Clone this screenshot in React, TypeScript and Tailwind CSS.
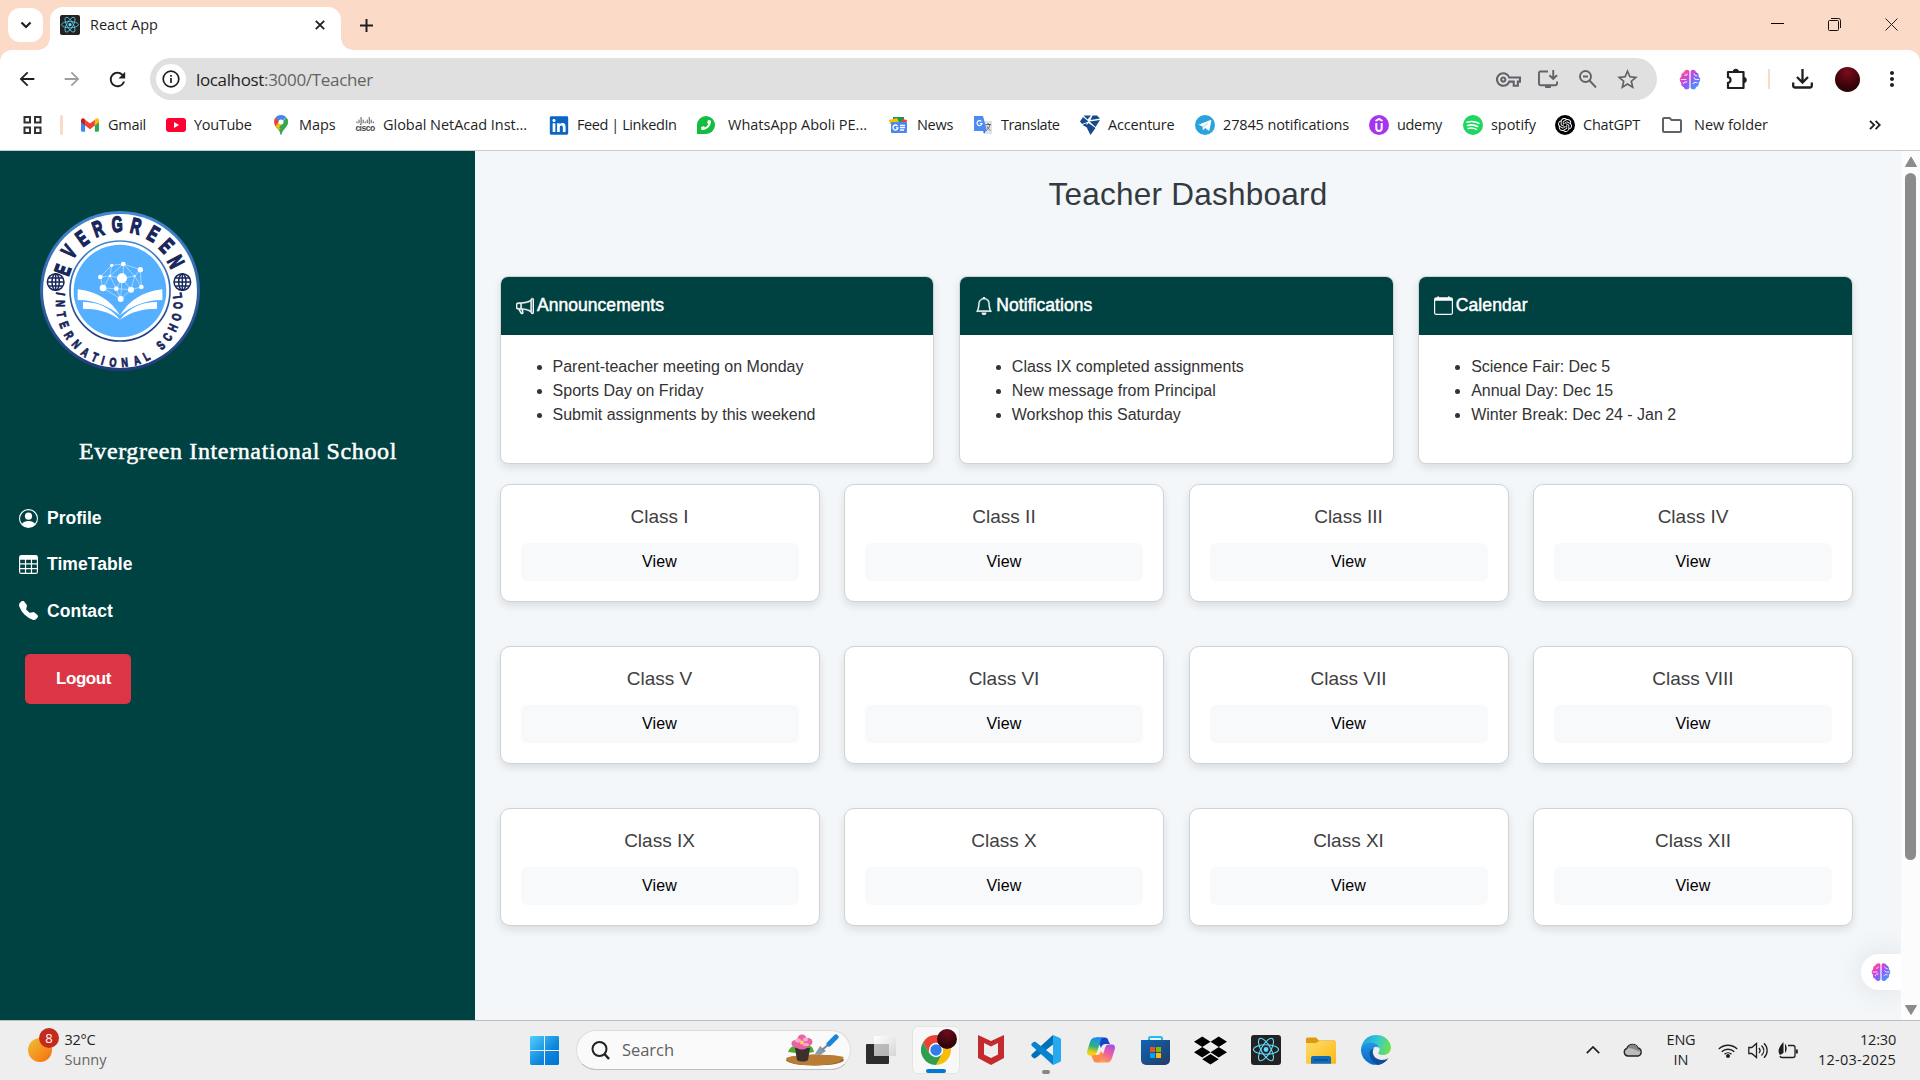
import React, { useLayoutEffect, useRef } from "react";
import { BsPersonCircle, BsTable, BsTelephoneFill, BsMegaphone, BsBell, BsCalendar } from "react-icons/bs";
import { FaLinkedin, FaPhoneAlt, FaDropbox } from "react-icons/fa";
import { SiOpenai } from "react-icons/si";
import {
  MdArrowBack, MdArrowForward, MdRefresh, MdOutlineVpnKey, MdStarOutline,
  MdMoreVert, MdOutlineFolder,
} from "react-icons/md";

/* Spreads the letters of a label over a given width. */
function Fit({ w, children, className = "" }: { w: number; children: string; className?: string }) {
  const ref = useRef<HTMLSpanElement>(null);
  useLayoutEffect(() => {
    const el = ref.current;
    if (!el) return;
    el.style.letterSpacing = "0px";
    const natural = el.getBoundingClientRect().width;
    el.style.letterSpacing = `${(w - natural) / children.length}px`;
  }, [w, children]);
  return <span ref={ref} className={`inline-block whitespace-nowrap ${className}`}>{children}</span>;
}

function ReactTile({ className = "" }: { className?: string }) {
  return (
    <svg viewBox="0 0 30 30" className={className}>
      <rect width="30" height="30" rx="3" fill="#222" />
      <g fill="none" stroke="#61dafb" strokeWidth="1.1">
        <ellipse cx="15" cy="14.5" rx="12.6" ry="4.7" />
        <ellipse cx="15" cy="14.5" rx="12.6" ry="4.7" transform="rotate(60 15 14.5)" />
        <ellipse cx="15" cy="14.5" rx="12.6" ry="4.7" transform="rotate(120 15 14.5)" />
      </g>
      <circle cx="15" cy="14.5" r="2.4" fill="#61dafb" />
    </svg>
  );
}

function Brain({ id, className = "" }: { id: string; className?: string }) {
  return (
    <svg viewBox="0 0 24 24" className={className}>
      <defs>
        <linearGradient id={id} x1="0" y1="0" x2="1" y2="1">
          <stop offset="0" stopColor="#ff9a2e" />
          <stop offset=".25" stopColor="#f03cc0" />
          <stop offset=".55" stopColor="#8b5cf6" />
          <stop offset="1" stopColor="#2bb3ff" />
        </linearGradient>
      </defs>
      <path fill={`url(#${id})`} d="M11.3 3.2v18c-2 2.6-5.6 1.8-6.2-1C2.600 19.300 2 17.200 2.500 15.500.200 13.500.300 10.300 2.500 9 2 6.500 3.500 4.400 5.400 4 6.500.800 10.500.700 11.300 3.200zM12.700 3.200v18c2 2.600 5.600 1.800 6.200-1 2.500-.900 3.100-3 2.600-4.700 2.300-2 2.200-5.200 0-6.500.500-2.500-1-4.600-2.900-5C17.500.800 13.500.700 12.700 3.200z" />
      <g fill="none" stroke="#fff" strokeWidth="1.100" opacity=".85">
        <path d="M2 12h6M6 7.500c2 0 3-.500 3-2M5 17c0-2 2-2.500 4-2.500M22 12h-4l-2-2M16 5.500l2 2.500h2M15 17l2-2 3 .500" />
      </g>
    </svg>
  );
}

const school: [string, number, number][] = [
  ["I", 183, 432], ["N", 182, 461], ["T", 185, 494], ["E", 193, 524], ["R", 208, 555], ["N", 230, 582],
  ["A", 256, 606], ["T", 285, 621], ["I", 309, 630], ["O", 339, 636], ["N", 374, 636], ["A", 410, 630],
  ["L", 439, 618], ["S", 482, 585], ["C", 502, 561], ["H", 518, 533], ["O", 529, 501], ["O", 533, 466], ["L", 531, 437],
];
const evergreen: [string, number, number][] = [
  ["E", 188, 360], ["V", 207, 305], ["E", 246, 265], ["R", 294, 236], ["G", 351, 222],
  ["R", 408, 228], ["E", 460, 251], ["E", 500, 287], ["N", 528, 335],
];
const deg = (a: number) => (a * 180) / Math.PI;

function Globe({ x, y }: { x: number; y: number }) {
  return (
    <g transform={`translate(${x} ${y})`} fill="none" stroke="#17265c" strokeWidth="4.500">
      <circle r="25" fill="#fff" />
      <ellipse rx="11" ry="25" />
      <path d="M0-25V25M-25 0H25M-21-12H21M-21 12H21" />
    </g>
  );
}

function Crest() {
  const nodes: [number, number, number][] = [
    [335, 346, 5], [370, 342, 7], [421, 359, 8], [301, 381, 7], [330, 378, 4], [366, 385, 15], [404, 378, 3],
    [309, 414, 10], [349, 416, 7], [393, 419, 9], [424, 411, 7], [362, 447, 9],
  ];
  return (
    <svg viewBox="120 183 480 480" className="h-40 w-40">
      <defs>
        <linearGradient id="ring" x1="0" y1="0" x2="0" y2="1">
          <stop offset="0" stopColor="#4588d0" />
          <stop offset="1" stopColor="#203c7c" />
        </linearGradient>
      </defs>
      <circle cx="360" cy="423" r="240" fill="url(#ring)" />
      <circle cx="360" cy="423" r="231" fill="#fff" />
      <circle cx="360" cy="423" r="150" fill="#fff" stroke="url(#ring)" strokeWidth="5" />
      <circle cx="360" cy="423" r="139" fill="#55b0ff" />
      <g fontFamily="Liberation Sans" fontWeight="700" fill="#17265c" stroke="#17265c" textAnchor="middle">
        {evergreen.map(([c, x, y], i) => (
          <text key={i} fontSize="66" strokeWidth="4.500" transform={`translate(${x} ${y}) rotate(${deg(Math.atan2(x - 360, 423 - y))}) scale(.64 1)`} y="23">{c}</text>
        ))}
        {school.map(([c, x, y], i) => (
          <text key={i} fontSize="38" strokeWidth="2.500" transform={`translate(${x} ${y}) rotate(${deg(Math.atan2(357 - x, y - 462))}) scale(.72 1)`} y="14">{c}</text>
        ))}
      </g>
      <Globe x={167} y={396} />
      <Globe x={547} y={396} />
      <path fill="none" stroke="#d5ebff" strokeWidth="1.800" d="M335 346L370 342L421 359L424 411L393 419L362 447L309 414L301 381L335 346L330 378L301 381M330 378L370 342L404 378L421 359M330 378L366 385L404 378L424 411M330 378L309 414L349 416L362 447L366 385L349 416L330 378M393 419L366 385M393 419L404 378M370 342V385M349 416L393 419" />
      {nodes.map(([x, y, r], i) => <circle key={i} cx={x} cy={y} r={r} fill="#fff" />)}
      <g fill="#fff">
        <path d="M233 418c55 5 100 33 127 78-35-28-75-46-127-46z" />
        <path d="M487 418c-55 5-100 33-127 78 35-28 75-46 127-46z" />
        <path d="M249 456c45 0 82 16 111 53-35-25-70-33-111-33z" />
        <path d="M471 456c-45 0-82 16-111 53 35-25 70-33 111-33z" />
      </g>
    </svg>
  );
}

/* Bookmark icons */
const GmailIcon = () => (
  <svg viewBox="0 0 24 18" className="h-3.5 w-[18px]">
    <path fill="#4285f4" d="M0 2.500V16a2 2 0 0 0 2 2h3.500V7z" />
    <path fill="#34a853" d="M24 2.500V16a2 2 0 0 1-2 2h-3.500V7z" />
    <path fill="#ea4335" d="M5.500 9.500V2L12 7l6.500-5v7.500L12 14.500z" />
    <path fill="#c5221f" d="M0 2.800C0 .300 2.800-.900 4.600.800L5.500 2v7.500L0 5.400z" />
    <path fill="#fbbc04" d="M24 2.800C24 .300 21.200-.900 19.400.800L18.500 2v7.500L24 5.400z" />
  </svg>
);
const YoutubeIcon = () => (
  <svg viewBox="0 0 20 14" className="h-3.5 w-5"><rect width="20" height="14" rx="3" fill="#ff0033" /><path d="M8 4v6l5-3z" fill="#fff" /></svg>
);
const MapsIcon = () => (
  <svg viewBox="0 0 14 20" className="h-5 w-3.5">
    <path fill="#34a853" d="M1 10.500C3 14 6 15 6.300 19c.200 1.300 1.200 1.300 1.400 0C8 15 14 12 14 7c0-1-.200-2-.600-3z" />
    <path fill="#fbbc04" d="M1.500 11.200L9 4l2 5-6 6z" />
    <path fill="#ea4335" d="M1.700 2.500C-.500 5-.300 8.500 1.300 11L6 6z" />
    <path fill="#4285f4" d="M1.700 2.500C4.500-.900 9.500-.500 12 2L6 9 4.500 6z" />
    <path fill="#34a853" d="M12 2c2.500 3 2.500 6.500 0 9.500L8 14 5 13z" />
    <circle cx="7" cy="7" r="2.500" fill="#fff" />
  </svg>
);
const CiscoIcon = () => (
  <span className="-mt-[3px] flex w-5 flex-col items-center">
    <svg viewBox="0 0 20 9" className="h-2 w-5"><path stroke="#444" strokeWidth="1" fill="none" d="M1 5v2M3.300 3v4M5.600 0v8M7.900 3v4M10.200 5v2M12.500 3v4M14.800 0v8M17 3v4M19.300 5v2" /></svg>
    <span className="font-['Liberation_Sans'] text-[8.500px] font-bold leading-[6px] tracking-[-0.500px] text-[#444]">cisco</span>
  </span>
);
const WhatsIcon = () => (
  <span className="flex h-[18px] w-[18px] items-center justify-center rounded-full rounded-bl-[4px] bg-[#12bd3f]"><FaPhoneAlt className="h-2.5 w-2.5 -scale-x-100 rotate-0 text-white" /></span>
);
const NewsIcon = () => (
  <svg viewBox="0 0 20 20" className="h-5 w-5">
    <path fill="#0c9d58" d="M4 2h11v6H4z" /><path fill="#ea4335" d="M13 4l5 1-1 5h-6z" /><path fill="#fbbc04" d="M0 5l8-2 3 6H1z" />
    <rect x="2" y="7" width="16" height="11" rx="1" fill="#4d87f0" />
    <path d="M8.500 11A2.500 2.500 0 1 0 9 12.800H7M11 10.500h5M11 12.700h5M11 15h4" stroke="#fff" strokeWidth="1.300" fill="none" />
  </svg>
);
const TranslateIcon = () => (
  <svg viewBox="0 0 20 20" className="h-5 w-5">
    <path fill="#dfe3e8" d="M8 6h11v13h-7z" /><path fill="#1a56c4" d="M10 15l3 0-2 4z" /><path fill="#4b8bf5" d="M1 1h9l4 15H1z" />
    <path d="M8.500 6.500A2.500 2.500 0 1 0 9 8.500H6.800" stroke="#fff" strokeWidth="1.200" fill="none" />
    <path d="M12.500 9.500H18M15.200 8v1.500M17 9.700c-.800 3-2 4.300-3.500 5.500M14 11.500c1 2 2 3 3.500 4" stroke="#666" strokeWidth="1" fill="none" />
  </svg>
);
const AccentureIcon = () => (
  <svg viewBox="0 0 20 20" className="h-5 w-5">
    <path fill="#154a8c" d="M3.500 .5h7.500L7.500 4.500zM12.500 .5H17l3 3-9.500 1.500zM0 6.500l3-4.500 5.500 4.500L2 9zM20 5l-4.500 7-6-5.500zM8.500 8l7 5-5 7-4.500-9zM2.500 10l4-2 .5 4.500z" />
  </svg>
);
const TelegramIcon = () => (
  <svg viewBox="0 0 20 20" className="h-5 w-5"><circle cx="10" cy="10" r="10" fill="#2aa3dd" /><path fill="#fff" d="M3.500 9.700L15.500 5c.600-.200 1 .1.900.800l-2 9.300c-.1.600-.6.700-1.100.400L10.200 13l-1.700 1.700c-.4.400-.8.200-.8-.4V11.500z" /><path d="M7.500 11.500l5.500-3.500-4.500 4.300" stroke="#b5dcf0" strokeWidth=".8" fill="none" /></svg>
);
const UdemyIcon = () => (
  <svg viewBox="0 0 20 20" className="h-5 w-5"><circle cx="10" cy="10" r="10" fill="#a435f0" /><path d="M6.500 6L10 4l3.500 2M7.300 8v5.300a2.700 2.700 0 0 0 5.400 0V8" stroke="#fff" strokeWidth="2" fill="none" /></svg>
);
const SpotifyIcon = () => (
  <svg viewBox="0 0 20 20" className="h-5 w-5"><circle cx="10" cy="10" r="10" fill="#1ed760" /><path d="M4 7.200c4-1.200 8.500-.800 12 1.200M4.600 10.400c3.500-1 7-.600 10 1.100M5.200 13.400c3-.800 5.600-.500 8.200 1" stroke="#fff" strokeWidth="1.600" strokeLinecap="round" fill="none" /></svg>
);
const GptIcon = () => <span className="flex h-5 w-5 items-center justify-center rounded-full bg-black text-white"><SiOpenai className="h-3.5 w-3.5" /></span>;

const bookmarks: { t: string; w: number; icon: React.ReactNode; far?: boolean }[] = [
  { t: "Gmail", w: 38, icon: <GmailIcon /> },
  { t: "YouTube", w: 57.5, icon: <YoutubeIcon /> },
  { t: "Maps", w: 36.5, icon: <MapsIcon /> },
  { t: "Global NetAcad Inst...", w: 144, icon: <CiscoIcon /> },
  { t: "Feed | LinkedIn", w: 99.5, icon: <FaLinkedin className="h-[21px] w-[21px] text-[#0a66c2]" /> },
  { t: "WhatsApp Aboli PE...", w: 139, icon: <WhatsIcon />, far: true },
  { t: "News", w: 36, icon: <NewsIcon /> },
  { t: "Translate", w: 58.5, icon: <TranslateIcon /> },
  { t: "Accenture", w: 66.5, icon: <AccentureIcon /> },
  { t: "27845 notifications", w: 126, icon: <TelegramIcon /> },
  { t: "udemy", w: 45, icon: <UdemyIcon /> },
  { t: "spotify", w: 45, icon: <SpotifyIcon /> },
  { t: "ChatGPT", w: 57, icon: <GptIcon /> },
  { t: "New folder", w: 74, icon: <MdOutlineFolder className="h-6 w-6 shrink-0 text-[#5f6368]" />, far: true },
];

function TabStrip() {
  return (
    <div className="flex h-[50px] bg-[#fcdac8] pl-2">
      <div className="mt-2 flex h-[34px] w-[35px] items-center justify-center rounded-[12px] bg-white">
        <svg viewBox="0 0 12 8" className="h-2 w-3"><path d="M1.500 1.500L6 6l4.500-4.500" stroke="#1f1f1f" strokeWidth="2.200" fill="none" /></svg>
      </div>
      <div className="relative ml-[7px] mt-[7px] flex w-[291px] items-center rounded-t-[13px] bg-white pb-[7px] pl-2.5">
        <span className="absolute bottom-0 -left-3 h-3 w-3 bg-[radial-gradient(circle_at_0_0,transparent_11.5px,white_12px)]" />
        <span className="absolute bottom-0 -right-3 h-3 w-3 bg-[radial-gradient(circle_at_100%_0,transparent_11.5px,white_12px)]" />
        <ReactTile className="h-5 w-5" />
        <span className="ml-2.5 flex-1 text-[14.5px] text-[#1f1f1f]"><Fit w={68}>React App</Fit></span>
        <svg viewBox="0 0 10 10" className="mr-[16px] h-2.5 w-2.5"><path d="M.8.800l8.400 8.400M9.200.800L.8 9.200" stroke="#1f1f1f" strokeWidth="1.800" /></svg>
      </div>
      <svg viewBox="0 0 13 13" className="ml-[18.5px] mt-[18.5px] h-[13px] w-[13px]"><path d="M6.500 0v13M0 6.500h13" stroke="#1f1f1f" strokeWidth="2" /></svg>
      <div className="ml-auto mr-[22px] mt-[18px] flex h-[13px] gap-[44px]">
        <svg viewBox="0 0 13 13" className="h-[13px] w-[13px]"><path d="M0 5.500h13" stroke="#000" /></svg>
        <svg viewBox="0 0 13 13" className="h-[13px] w-[13px]" fill="none" stroke="#111"><rect x=".5" y="2.500" width="10" height="10" rx="1" /><path d="M3 .5h7.500a2 2 0 0 1 2 2V10" /></svg>
        <svg viewBox="0 0 13 13" className="h-[13px] w-[13px]"><path d="M.5.500l12 12M12.500.500l-12 12" stroke="#222" strokeWidth="1" /></svg>
      </div>
    </div>
  );
}

function Toolbar() {
  return (
    <div className="flex h-[50px] items-center pl-[16px] pt-2 text-[#1f1f1f]">
      <MdArrowBack className="h-[22px] w-[22px]" />
      <MdArrowForward className="ml-[23px] h-[22px] w-[22px] text-[#9e9e9e]" />
      <MdRefresh className="ml-[23px] h-[23px] w-[23px]" />
      <div className="ml-[21px] flex h-[42px] w-[1507px] items-center rounded-full bg-[#e0e0e0] pl-[6px] pr-[17px] text-[#5f6368]">
        <span className="flex h-[30px] w-[30px] items-center justify-center rounded-full bg-white">
          <svg viewBox="0 0 18 18" className="h-[18px] w-[18px]" fill="none" stroke="#1f1f1f" strokeWidth="1.700"><circle cx="9" cy="9" r="7.800" /><path d="M9 8v5M9 5v1.700" /></svg>
        </span>
        <span className="ml-2.5 flex-1 pt-px text-[17px]"><Fit w={68} className="text-[#1f1f1f]">localhost</Fit><Fit w={109} className="text-[#646464]">:3000/Teacher</Fit></span>
        <MdOutlineVpnKey className="h-[25px] w-[25px]" />
        <svg viewBox="0 0 22 20" className="ml-[16px] h-[19px] w-[22px]" fill="none" stroke="#5f6368" strokeWidth="2"><path d="M11 1.500H3a1.500 1.500 0 0 0-1.500 1.500v11.500A1.500 1.500 0 0 0 3 16h16a1.500 1.500 0 0 0 1.500-1.500V12M8 18h6M16.500 0v9M12.500 5.500l4 4 4-4" /></svg>
        <svg viewBox="0 0 18 18" className="ml-[20px] h-[18px] w-[18px]" fill="none" stroke="#5f6368" strokeWidth="1.900"><circle cx="6.500" cy="6.500" r="5.500" /><path d="M10.500 10.500l6.500 7M4 6.500h5" /></svg>
        <MdStarOutline className="ml-[18px] h-[25px] w-[25px]" />
      </div>
      <Brain id="brain-toolbar" className="ml-[22px] h-[23px] w-[22px]" />
      <svg viewBox="0 0 22 22" className="ml-[25px] h-[22px] w-[22px]"><path d="M2 4h15.500v16H2v-5.200c3.400-.6 3.400-5 0-5.600z" fill="none" stroke="#1f1f1f" strokeWidth="2.200" strokeLinejoin="round" /><path d="M7 4a2.800 2.800 0 0 1 5.600 0zM17.500 9.200a2.800 2.800 0 0 1 0 5.600z" fill="#1f1f1f" stroke="#1f1f1f" /></svg>
      <span className="ml-[20px] h-5 w-0.5 bg-[#fcdac8]" />
      <svg viewBox="0 0 21 20" className="ml-[22px] h-5 w-[21px]" fill="none" stroke="#1f1f1f" strokeWidth="2.300"><path d="M10.500 0v13M5 8l5.500 5.500L16 8M1.200 13.500v3a2 2 0 0 0 2 2h14.600a2 2 0 0 0 2-2v-3" /></svg>
      <span className="ml-[22px] h-[25px] w-[25px] rounded-full bg-[radial-gradient(circle_at_50%_20%,#7d0c1c,#3a040a_60%,#1d0205)]" />
      <MdMoreVert className="ml-[20px] h-6 w-6" />
    </div>
  );
}

function Bookmarks() {
  return (
    <div className="flex h-[50px] items-center text-[14.5px] text-[#1f1f1f]">
      <svg viewBox="0 0 19 18" className="ml-[23px] h-[18px] w-[19px]" fill="none" stroke="#303030" strokeWidth="2"><path d="M1.500 1h5.500v5.500H1.500zM12 1h5.500v5.500H12zM1.500 11.500h5.500V17H1.500zM12 11.500h5.500V17H12z" /></svg>
      <span className="ml-[18px] h-5 w-[3px] rounded bg-[#fcdac8]" />
      <div className="ml-[17px] grid grid-cols-[86px_105px_84px_194px_147px_193px_84px_107px_115px_174px_94px_92px_107px_120px]">
        {bookmarks.map((b) => (
          <div key={b.t} className={b.far ? "flex items-center gap-3" : "flex items-center gap-2"}>
            <span className="flex w-5 shrink-0 items-center justify-center">{b.icon}</span>
            <Fit w={b.w}>{b.t}</Fit>
          </div>
        ))}
      </div>
      <svg viewBox="0 0 12 10" className="ml-[87px] h-2.5 w-3" fill="none" stroke="#1f1f1f" strokeWidth="1.800"><path d="M1 .8L5.200 5 1 9.200M6.600.800L10.800 5l-4.200 4.200" /></svg>
    </div>
  );
}

function Sidebar() {
  const items = [
    { t: "Profile", w: 54.5, icon: <BsPersonCircle className="h-[19px] w-[19px]" /> },
    { t: "TimeTable", w: 85.5, icon: <BsTable className="h-[19px] w-[19px]" /> },
    { t: "Contact", w: 66, icon: <BsTelephoneFill className="h-[19px] w-[19px]" /> },
  ];
  return (
    <aside className="flex w-[475px] flex-col items-start bg-[#004141] font-['Liberation_Sans',sans-serif] text-white">
      <div className="ml-10 mt-[60px]"><Crest /></div>
      <div className="ml-[79px] mt-[62px] h-9 font-['Liberation_Serif',serif] text-[24px] leading-9 [-webkit-text-stroke:0.5px_#fff]">
        <Fit w={318}>Evergreen International School</Fit>
      </div>
      <nav className="ml-[19px] mt-[26px]">
        {items.map((i) => (
          <div key={i.t} className="flex h-[46.300px] items-center gap-[9px] text-[17.5px] font-bold">
            {i.icon}<Fit w={i.w}>{i.t}</Fit>
          </div>
        ))}
      </nav>
      <button className="ml-[25px] mt-[20px] h-[50px] w-[106px] rounded-[5px] bg-[#dc3545] pb-px pl-[31px] text-left text-[17px] font-bold"><Fit w={55}>Logout</Fit></button>
    </aside>
  );
}

const panels = [
  { t: "Announcements", w: 127, icon: <BsMegaphone className="h-[18px] w-[18px] [stroke-width:0.4] [stroke:#fff]" />, rows: [["Parent-teacher meeting on Monday", 251], ["Sports Day on Friday", 151], ["Submit assignments by this weekend", 263]] },
  { t: "Notifications", w: 96, icon: <BsBell className="h-[18px] w-[18px] [stroke-width:0.3] [stroke:#fff]" />, rows: [["Class IX completed assignments", 232], ["New message from Principal", 204], ["Workshop this Saturday", 169]] },
  { t: "Calendar", w: 72, icon: <BsCalendar className="h-[19px] w-[19px]" />, rows: [["Science Fair: Dec 5", 139], ["Annual Day: Dec 15", 142], ["Winter Break: Dec 24 - Jan 2", 205]] },
] as { t: string; w: number; icon: React.ReactNode; rows: [string, number][] }[];

const classes = ["I", "II", "III", "IV", "V", "VI", "VII", "VIII", "IX", "X", "XI", "XII"];

function Dashboard() {
  return (
    <main className="relative flex-1 overflow-hidden bg-[#f3f7fa] pl-[24.500px] font-['Liberation_Sans',sans-serif] text-[#343a40]">
      <h1 className="mt-[24px] -ml-[24.500px] h-[38px] text-center text-[31.500px] leading-[38px]"><Fit w={279}>Teacher Dashboard</Fit></h1>
      <div className="mt-[63px] grid w-[1353.500px] grid-cols-3 gap-[24.500px]">
        {panels.map((p) => (
          <section key={p.t} className="h-[188px] overflow-hidden rounded-[8px] border border-[#d0d2d3] bg-white shadow-[0_4px_8px_rgba(0,0,0,0.1)]">
            <header className="flex h-[58px] items-center bg-[#004141] pb-px pl-[14px] text-[17.5px] text-white">
              <span className="flex w-5 justify-center">{p.icon}</span>
              <Fit w={p.w} className="ml-[2.500px] [-webkit-text-stroke:0.5px_#fff]">{p.t}</Fit>
            </header>
            <ul className="mt-[20px] list-disc pl-[52px] text-base leading-6 text-[#333]">
              {p.rows.map(([r, w]) => <li key={r}><Fit w={w}>{r}</Fit></li>)}
            </ul>
          </section>
        ))}
      </div>
      <div className="mt-5 grid w-[1353.500px] grid-cols-4 gap-x-[24.500px] gap-y-11">
        {classes.map((c) => (
          <section key={c} className="flex h-[118px] flex-col items-center rounded-[10px] border border-[#d0d2d3] bg-white px-5 shadow-[0_4px_8px_rgba(0,0,0,0.1)]">
            <h2 className="mt-[20px] h-6 text-[19px] leading-6 text-[#404040]">Class {c}</h2>
            <button className="mt-[14px] h-[38px] w-full rounded-[6px] bg-[#f8f9fb] text-base text-black"><Fit w={35}>View</Fit></button>
          </section>
        ))}
      </div>
      <div className="absolute right-0 top-[803px] flex h-9 w-10 items-center rounded-l-full bg-white pl-2.5 shadow-[0_0_30px_rgba(0,0,0,0.1)]">
        <Brain id="brain-float" className="h-5 w-5" />
      </div>
    </main>
  );
}

function Scrollbar() {
  return (
    <div className="flex w-[19px] flex-col items-center bg-[#fcfcfc] pt-[6px]">
      <svg viewBox="0 0 12 10" className="h-2.5 w-3"><path d="M6 0l5.500 9.500H.5z" fill="#8b8b8b" stroke="#8b8b8b" strokeLinejoin="round" /></svg>
      <span className="mt-[6px] h-[687px] w-[11px] rounded-full bg-[#8b8b8b]" />
      <svg viewBox="0 0 12 10" className="mt-auto mb-[5px] h-2.5 w-3"><path d="M6 9.500L11.500.500H.5z" fill="#8b8b8b" stroke="#8b8b8b" strokeLinejoin="round" /></svg>
    </div>
  );
}

const ChromeIcon = () => (
  <svg viewBox="0 0 30 30" className="h-[30px] w-[30px]">
    <path fill="#fbbc04" d="M15 8h13.200A15 15 0 0 1 15 30l6-11z" />
    <path fill="#ea4335" d="M2 7.500L9 19l6-11h13.200A15 15 0 0 0 2 7.500z" />
    <path fill="#2f9e4f" d="M2 7.500A15 15 0 0 0 15 30l6-11-12 0z" />
    <circle cx="15" cy="15" r="7.200" fill="#fff" /><circle cx="15" cy="15" r="5.700" fill="#2f7de9" />
  </svg>
);
const McAfee = () => (
  <svg viewBox="0 0 28 30" className="h-[30px] w-7"><path fill="#c32b2f" d="M1 0l13 6L27 0v23l-13 7L1 23zM7 8v11.500l7 3.500 7-3.500V8l-7 3.500z" fillRule="evenodd" /></svg>
);
const Code = () => (
  <svg viewBox="0 0 30 30" className="h-[30px] w-[30px]">
    <path fill="#0070b8" d="M22 0L1 19c-1 1-.8 2 0 2.700l1.500 1.300c.6.500 1.500.500 2.200 0L22 9.500z" />
    <path fill="#0884cf" d="M22 30L1 11c-1-1-.8-2 0-2.700L2.500 7c.6-.500 1.500-.500 2.200 0L22 20.500z" />
    <path fill="#27a9f2" d="M22 0l7 3c.7.400 1 1 1 1.700v20.600c0 .700-.3 1.300-1 1.700l-7 3z" />
  </svg>
);
const Copilot = () => (
  <svg viewBox="0 0 28 26" className="h-[26px] w-7">
    <defs>
      <linearGradient id="cp1" x1=".3" y1="0" x2=".1" y2="1"><stop stopColor="#1a8ff0" /><stop offset=".45" stopColor="#2fb27d" /><stop offset=".8" stopColor="#f5ce17" /></linearGradient>
      <linearGradient id="cp2" x1=".7" y1="0" x2=".3" y2="1"><stop stopColor="#a64de8" /><stop offset=".5" stopColor="#f0609a" /><stop offset="1" stopColor="#ffa05a" /></linearGradient>
    </defs>
    <path fill="#1646c8" d="M9 .5h9c2 0 3 1.500 3.500 3.500L23 7h-4c-3 0-4 1-5 4z" />
    <path fill="#ff8b4a" d="M4 18h5c3 0 4-1 5-4l3 4-3 6c-.5 1.200-1 1.500-2 1.500H9.500c-2 0-3-1-3.500-3z" />
    <path fill="url(#cp1)" d="M8 .5h9c-2 0-3 1.500-3.500 3.500L10 15c-.7 2.500-2 3.500-4 3.500H3c-2.500 0-3.500-2-2.700-5L3 5C4 2 5.500.500 8 .500z" />
    <path fill="url(#cp2)" d="M20 25.500h-9c2 0 3-1.500 3.500-3.500L18 11c.7-2.500 2-3.500 4-3.500h3c2.500 0 3.500 2 2.700 5L25 21c-1 3-2.500 4.500-5 4.500z" />
  </svg>
);
const Store = () => (
  <svg viewBox="0 0 29 29" className="h-[29px] w-[29px]">
    <defs><linearGradient id="st" x1="0" y1="0" x2="1" y2="1"><stop stopColor="#0f66b6" /><stop offset="1" stopColor="#243a63" /></linearGradient></defs>
    <path d="M8 5V2.500A1.500 1.500 0 0 1 9.500 1h10A1.500 1.500 0 0 1 21 2.500V5" fill="none" stroke="#21bdf0" strokeWidth="2" />
    <path fill="url(#st)" d="M0 4h29v20a5 5 0 0 1-5 5H5a5 5 0 0 1-5-5z" />
    <path fill="#f25022" d="M9 11h5v5H9z" /><path fill="#7fba00" d="M15 11h5v5h-5z" /><path fill="#00a4ef" d="M9 17h5v5H9z" /><path fill="#ffb900" d="M15 17h5v5h-5z" />
  </svg>
);
const Explorer = () => (
  <svg viewBox="0 0 30 27" className="h-[27px] w-[30px]">
    <defs><linearGradient id="ex" x1="0" y1="0" x2="1" y2="1"><stop stopColor="#ffdc6b" /><stop offset="1" stopColor="#fbb811" /></linearGradient></defs>
    <path fill="#dd9b0c" d="M0 2a1.500 1.500 0 0 1 1.500-1.500H10L13 3.500h16v6H0z" />
    <path fill="url(#ex)" d="M0 6h10l3-2h16a1 1 0 0 1 1 1v21a.8.800 0 0 1-.8.800H.8A.8.800 0 0 1 0 26z" />
    <path fill="#0f6cbd" d="M5 26.800V21a2 2 0 0 1 2-2h16a2 2 0 0 1 2 2v5.800z" /><path stroke="#083f75" d="M8 23h14" />
  </svg>
);
const Edge = () => (
  <svg viewBox="0 0 30 30" className="h-[30px] w-[30px]">
    <defs>
      <linearGradient id="e1" x1="0" y1=".3" x2="1" y2=".5"><stop stopColor="#1f9fdc" /><stop offset=".5" stopColor="#31c7d8" /><stop offset="1" stopColor="#6fe24a" /></linearGradient>
      <linearGradient id="e2" x1="0" y1="0" x2="0" y2="1"><stop stopColor="#2597e0" /><stop offset="1" stopColor="#0a66c8" /></linearGradient>
    </defs>
    <path fill="url(#e2)" d="M0 14C1 8 6 6.500 10 7c5 .5 8 3 8 6-4-3-7 0-6 5 1 5 4 7 9 7l5 0A15 15 0 0 1 0 14z" />
    <path fill="#0f4fa0" d="M8.500 18c0 6 4 10.500 8.500 11.900C21 29.500 25 27 27.500 23c-4 3-12 3-15.500-3-1-2-.5-5 1-6.500-3 .5-4.500 2.500-4.500 4.500z" />
    <path fill="url(#e1)" d="M0 14.500C.5 6 7 0 15 0c9 0 15 6.500 15 12.500 0 5-4 7.500-8 7.500-3 0-5.500-1-4.500-2.500 2-2.500 1-5.500-1-7.500C12 6 2.500 7 0 14.500z" />
  </svg>
);
const Flower = () => (
  <svg viewBox="0 0 60 32" className="h-8 w-[60px]">
    <ellipse cx="30" cy="26" rx="29" ry="5.500" fill="#9b6528" /><path d="M1 24c10-4 45-4 58-1l-5 5c-15 5-40 4-50 0z" fill="#b87c35" />
    <path fill="#55a630" d="M3 18c2-6 7-7 10-4l-2 5zM29 18c-1-6-5-8-9-5l3 6z" />
    <path d="M10 14h15l-2 12c-3 2-8 2-11 0z" fill="#3b302e" />
    <g fill="#ea62a4"><ellipse cx="11" cy="9.500" rx="4.500" ry="3.500" /><circle cx="17" cy="5" r="4.500" /><ellipse cx="23" cy="8" rx="4.500" ry="4" /><ellipse cx="17" cy="12" rx="6" ry="3.500" /></g>
    <g fill="#f9a9cf"><ellipse cx="13" cy="6.500" rx="3" ry="2" /><ellipse cx="20.500" cy="5.500" rx="2.500" ry="2" /><ellipse cx="21" cy="10.500" rx="3" ry="1.500" /></g><circle cx="17" cy="8.500" r="2" fill="#ffd166" />
    <path d="M30 20l5-8 6 5-6 4z" fill="#8a9aa8" /><path d="M37 16l7-6" stroke="#7b8794" strokeWidth="2" /><path d="M44 10l7-7" stroke="#1b86d8" strokeWidth="5" strokeLinecap="round" />
  </svg>
);

function Taskbar() {
  const apps = [<McAfee key="m" />, <Code key="v" />, <Copilot key="c" />, <Store key="s" />, <FaDropbox key="d" className="h-[33px] w-[33px] text-black" />, <ReactTile key="r" className="h-[30px] w-[30px]" />, <Explorer key="x" />, <Edge key="e" />];
  return (
    <footer className="flex h-[60px] items-center border-t border-[#bcbec0] bg-[#eeeeee] pb-px text-[14.500px] text-[#1f1f1f]">
      <div className="relative ml-7 h-6 w-6 rounded-full bg-linear-135 from-[#edc032] to-[#f4690c]">
        <span className="absolute -top-[10px] left-[11px] flex h-5 w-5 items-center justify-center rounded-full bg-[#c42b1c] text-[13px] leading-none text-white">8</span>
      </div>
      <div className="ml-[12.500px] w-[100px] leading-5"><Fit w={31}>32°C</Fit><br /><Fit w={42} className="text-[#666]">Sunny</Fit></div>
      <svg viewBox="0 0 29 29" className="ml-[365.500px] h-[29px] w-[29px]">
        <defs><linearGradient id="win" x1="0" y1="0" x2="1" y2="1"><stop stopColor="#4fd0ff" /><stop offset=".6" stopColor="#0f86dc" /><stop offset="1" stopColor="#0072d0" /></linearGradient></defs>
        <path fill="url(#win)" d="M1 0h13v14H0V1zM15 0h13l1 1v13H15zM0 15h14v14H1l-1-1zM15 15h14v13l-1 1H15z" />
      </svg>
      <div className="ml-[17px] flex h-10 w-[275px] items-center rounded-full border border-[#dcdcdc] border-b-[#bdbdbd] bg-[#fafafa] pl-[14px]">
        <svg viewBox="0 0 19 19" className="h-[19px] w-[19px]" fill="none" stroke="#222" strokeWidth="2"><circle cx="8.500" cy="8" r="7" /><path d="M13.500 13l4.500 5" strokeWidth="2.500" /></svg>
        <Fit w={52} className="ml-3 pt-px text-[16.500px] text-[#616161]">Search</Fit>
        <span className="ml-auto mr-[5px]"><Flower /></span>
      </div>
      <svg viewBox="0 0 30 28" className="ml-[15px] h-7 w-[30px]">
        <defs><linearGradient id="tv" x1="0" y1="0" x2="1" y2="1"><stop stopColor="#fff" /><stop offset="1" stopColor="#d5d5d5" /></linearGradient></defs>
        <rect y="8" width="23" height="20" rx="1" fill="#2d2d2c" /><rect x="8" width="22" height="20" rx="1" fill="url(#tv)" /><path d="M8 8h15v12H8z" fill="#9a9a9a" opacity=".6" />
      </svg>
      <div className="relative ml-4 flex h-12 w-12 items-center justify-center rounded-md border border-[#e4e4e4] bg-[#f8f8f8]">
        <ChromeIcon />
        <span className="absolute right-[2px] top-[2px] h-5 w-5 rounded-full bg-[radial-gradient(circle_at_50%_20%,#6d0c1c,#30040a_70%)]" />
        <span className="absolute bottom-0 h-1 w-5 rounded-full bg-[#0078d4]" />
      </div>
      <div className="ml-[3px] flex">
        {apps.map((a, i) => (
          <div key={i} className="relative flex h-12 w-[55px] items-center justify-center">
            {a}
            {i === 1 && <span className="absolute bottom-0 h-1 w-2 rounded-full bg-[#868686]" />}
          </div>
        ))}
      </div>
      <div className="ml-auto mr-6 flex items-center">
        <svg viewBox="0 0 14 8" className="h-2 w-3.5"><path d="M.8 7.200L7 1l6.200 6.200" stroke="#1f1f1f" strokeWidth="1.700" fill="none" /></svg>
        <svg viewBox="0 0 20 14" className="ml-[23px] h-3.5 w-5"><path d="M4.500 13a4 4 0 0 1-.6-7.700A6 6 0 0 1 15 5a4.200 4.200 0 0 1 .5 8z" fill="#bcbcbc" stroke="#222" strokeWidth="1.300" /><path d="M5 5a5 5 0 0 1 9.500 0L18 9 9 5.500z" fill="#858585" /></svg>
        <div className="ml-[22px] w-[32px] text-center leading-5"><Fit w={29}>ENG</Fit><br /><Fit w={15}>IN</Fit></div>
        <svg viewBox="0 0 20 15" className="ml-[21px] h-[15px] w-5" fill="none" stroke="#1f1f1f" strokeWidth="1.400"><path d="M.8 6a13 13 0 0 1 18.400 0M3.700 8.800a9 9 0 0 1 12.600 0M6.500 11.300a5 5 0 0 1 7 0" /><circle cx="10" cy="13" r="1.300" fill="#1f1f1f" /></svg>
        <svg viewBox="0 0 20 17" className="ml-2.5 h-[17px] w-5" fill="none" stroke="#1f1f1f" strokeWidth="1.300"><path d="M.8 5.500v6h3L8.500 15.500v-14L3.800 5.500zM11 6c1.300 1.500 1.300 3.500 0 5M13.500 3.500c3 3 3 7 0 10M16 1.200c4.200 4.200 4.200 10.400 0 14.600" /></svg>
        <svg viewBox="0 0 20 17" className="ml-2.5 h-[17px] w-5" fill="none" stroke="#1f1f1f" strokeWidth="1.300"><path d="M10 3.500h5a2 2 0 0 1 2 2v8a2 2 0 0 1-2 2H4a2 2 0 0 1-2-1.500" /><path d="M18.800 7.500v4" strokeWidth="2" /><path d="M5.500 0v11L2 13C-.5 10 0 5.500 5.500 0zM7 1.500C9.500 5 9 9 7 11z" fill="#1f1f1f" stroke="none" /></svg>
        <div className="ml-4 w-[82px] text-right leading-5"><Fit w={36}>12:30</Fit><br /><Fit w={78}>12-03-2025</Fit></div>
      </div>
    </footer>
  );
}

export default function App() {
  return (
    <div className="flex h-[1080px] w-[1920px] flex-col overflow-hidden bg-white font-['Open_Sans',sans-serif]">
      <TabStrip />
      <div className="h-[101px] border-b border-[#c8cacb] bg-[#fcdac8]">
        <div className="h-[100px] rounded-t-[12px] bg-white"><Toolbar /><Bookmarks /></div>
      </div>
      <div className="flex min-h-0 flex-1"><Sidebar /><Dashboard /><Scrollbar /></div>
      <Taskbar />
    </div>
  );
}
